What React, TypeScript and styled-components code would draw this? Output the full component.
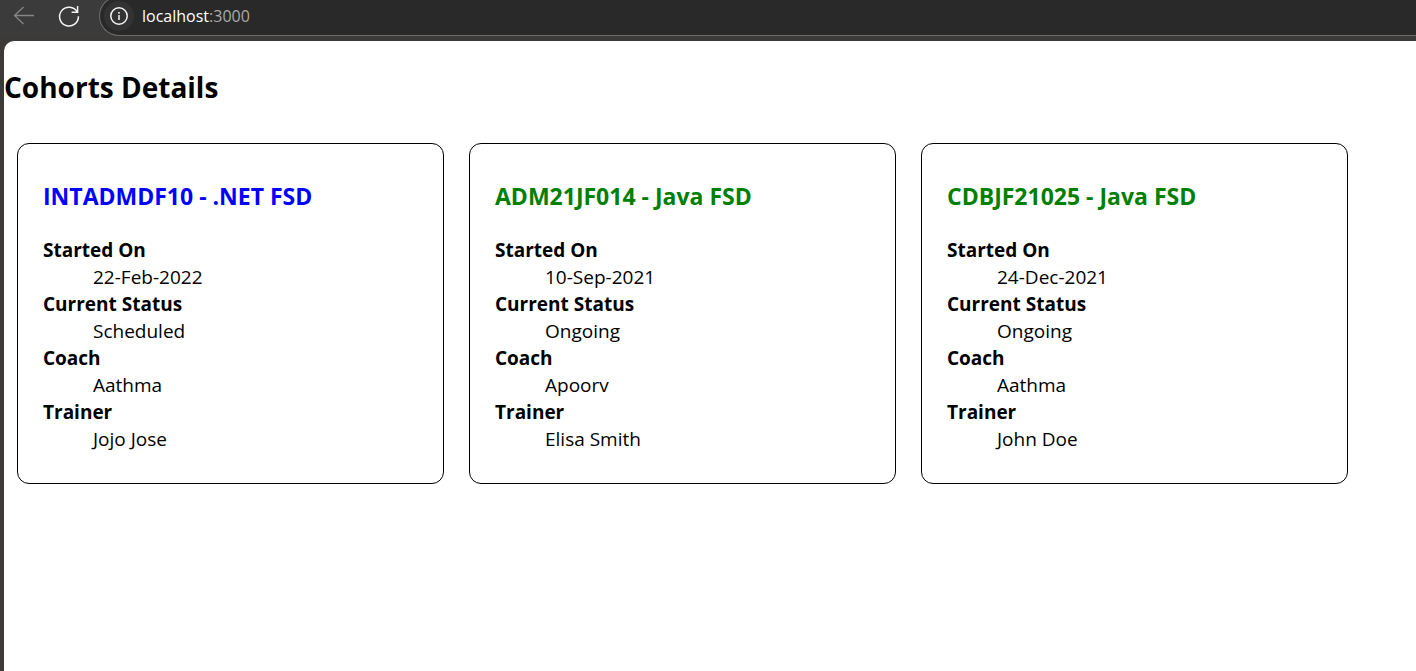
import React from "react";
import styled, { createGlobalStyle } from "styled-components";

const GlobalStyle = createGlobalStyle`
  * { box-sizing: border-box; }
  body {
    margin: 0;
    background: #3b3a39;
    font-family: "Segoe UI", "Open Sans", "Noto Sans", sans-serif;
  }
`;

const Window = styled.div`
  display: flex;
  flex-direction: column;
  min-height: 100vh;
`;

const Toolbar = styled.header`
  display: flex;
  align-items: flex-end;
  height: 36px;
  margin-bottom: 5px;
  padding-left: 12px;
  background: #3b3b3b;
`;

const ToolButton = styled.button<{ $dim?: boolean }>`
  display: flex;
  align-items: center;
  justify-content: center;
  width: 24px;
  height: 24px;
  margin: 0 21px 8px 0;
  padding: 0;
  border: 0;
  background: none;
  color: ${(p) => (p.$dim ? "#858585" : "#f4f4f4")};
`;

const AddressBar = styled.div`
  display: flex;
  flex: 1;
  align-items: center;
  gap: 8px;
  height: 40px;
  margin-left: -3px;
  padding-left: 4px;
  border: 1px solid #6c6c6c;
  border-right: 0;
  border-radius: 20px 0 0 20px;
  background: #292929;
`;

const InfoButton = styled.button`
  display: flex;
  align-items: center;
  justify-content: center;
  width: 30px;
  height: 30px;
  padding: 0;
  border: 0;
  border-radius: 50%;
  background: #333;
  color: #f4f4f4;
`;

const Url = styled.span`
  color: #a9a9a9;
  font-size: 16px;
  line-height: 24px;
`;

const Host = styled.span`
  color: #fff;
`;

const Page = styled.main`
  flex: 1;
  margin-left: 4px;
  border-top-left-radius: 10px;
  background: #fff;
  color: #000;
`;

const PageTitle = styled.h1`
  margin: 0;
  padding: 26px 0 22px;
  font-size: 28px;
  line-height: 40px;
`;

const CardList = styled.div`
  display: flex;
  flex-wrap: wrap;
  gap: 25px;
  padding: 14px 13px;
`;

const Card = styled.article`
  width: 427px;
  padding: 36px 25px 30px;
  border: 1px solid #000;
  border-radius: 12px;
`;

const CardTitle = styled.h2<{ $ongoing: boolean }>`
  margin: 0 0 25px;
  color: ${(p) => (p.$ongoing ? "green" : "blue")};
  font-size: 23px;
  line-height: 32px;
`;

const Details = styled.dl`
  margin: 0;
  font-size: 19px;
  line-height: 27px;
`;

const Term = styled.dt`
  font-weight: 700;
`;

const Value = styled.dd`
  margin: 0 0 0 50px;
`;

type Cohort = {
  code: string;
  startedOn: string;
  status: string;
  coach: string;
  trainer: string;
};

const cohorts: Cohort[] = [
  { code: "INTADMDF10 - .NET FSD", startedOn: "22-Feb-2022", status: "Scheduled", coach: "Aathma", trainer: "Jojo Jose" },
  { code: "ADM21JF014 - Java FSD", startedOn: "10-Sep-2021", status: "Ongoing", coach: "Apoorv", trainer: "Elisa Smith" },
  { code: "CDBJF21025 - Java FSD", startedOn: "24-Dec-2021", status: "Ongoing", coach: "Aathma", trainer: "John Doe" },
];

function CohortCard({ cohort }: { cohort: Cohort }) {
  return (
    <Card>
      <CardTitle $ongoing={cohort.status === "Ongoing"}>{cohort.code}</CardTitle>
      <Details>
        <Term>Started On</Term>
        <Value>{cohort.startedOn}</Value>
        <Term>Current Status</Term>
        <Value>{cohort.status}</Value>
        <Term>Coach</Term>
        <Value>{cohort.coach}</Value>
        <Term>Trainer</Term>
        <Value>{cohort.trainer}</Value>
      </Details>
    </Card>
  );
}

export default function App() {
  return (
    <Window>
      <GlobalStyle />
      <Toolbar>
        <ToolButton $dim aria-label="Back">
          <svg width="24" height="24" viewBox="0 0 24 24" fill="none" stroke="currentColor" strokeWidth="1.3">
            <path d="M22 11.5H2.5M11.5 3L2.5 11.5l9 8.5" />
          </svg>
        </ToolButton>
        <ToolButton aria-label="Refresh">
          <svg width="24" height="24" viewBox="0 0 24 24" fill="none" stroke="currentColor" strokeWidth="1.5">
            <path d="M20.2 8A9.4 9.4 0 1 0 21.4 12.2M20.6 2v6.3h-6" />
          </svg>
        </ToolButton>
        <AddressBar>
          <InfoButton aria-label="View site information">
            <svg width="20" height="20" viewBox="0 0 20 20" fill="none" stroke="currentColor" strokeWidth="1.5">
              <circle cx="10" cy="10" r="8.2" />
              <path d="M10 9v5M10 6v1.7" />
            </svg>
          </InfoButton>
          <Url role="textbox" aria-label="Address">
            <Host>localhost</Host>:3000
          </Url>
        </AddressBar>
      </Toolbar>
      <Page>
        <PageTitle>Cohorts Details</PageTitle>
        <CardList>
          {cohorts.map((cohort) => (
            <CohortCard key={cohort.code} cohort={cohort} />
          ))}
        </CardList>
      </Page>
    </Window>
  );
}
